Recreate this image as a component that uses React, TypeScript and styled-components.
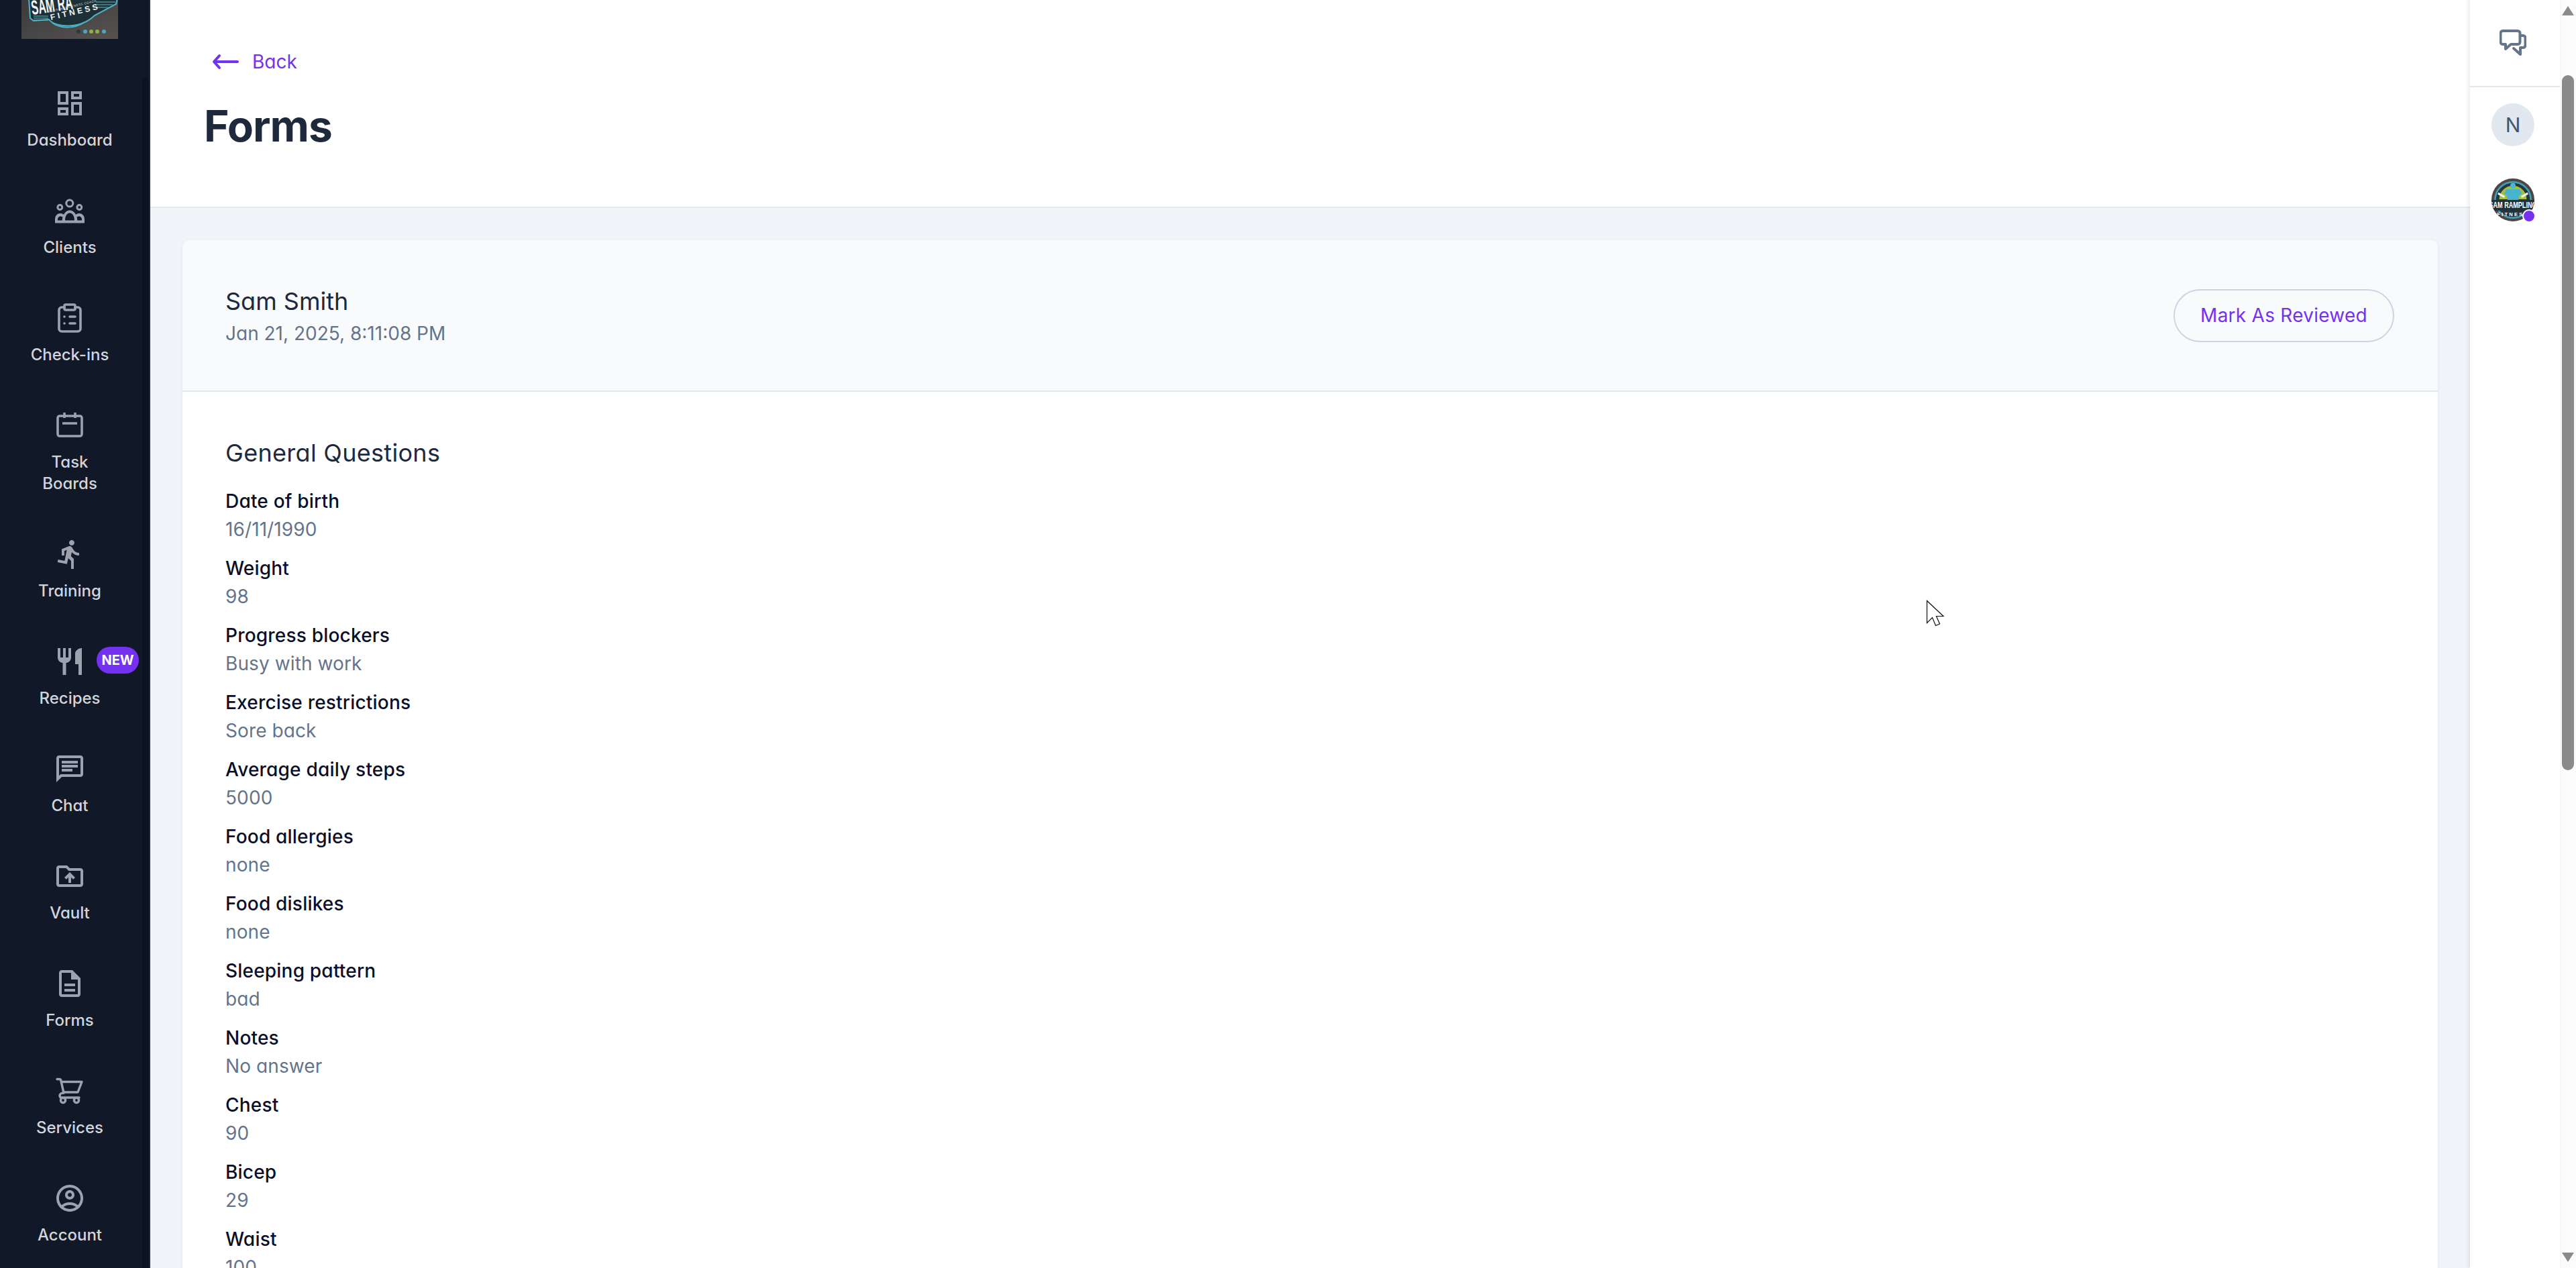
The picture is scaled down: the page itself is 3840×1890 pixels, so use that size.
import React from 'react';
import styled, { createGlobalStyle } from 'styled-components';
import {
  MdOutlineDashboard,
  MdDirectionsRun,
  MdRestaurant,
  MdOutlineChat,
  MdOutlineDriveFolderUpload,
  MdOutlineDescription,
  MdOutlineAccountCircle,
} from 'react-icons/md';
import { ClipboardList } from 'lucide-react';

const GlobalStyle = createGlobalStyle`
  html, body {
    margin: 0;
    padding: 0;
    height: 100%;
    overflow: hidden;
    background: #ffffff;
  }
  * {
    box-sizing: border-box;
  }
`;

const Page = styled.div`
  position: relative;
  display: flex;
  width: 3840px;
  height: 1890px;
  overflow: hidden;
  font-family: Inter, "Liberation Sans", sans-serif;
  font-feature-settings: 'cv11' 1;
`;

const Sidebar = styled.aside`
  position: relative;
  flex: 0 0 224px;
  display: flex;
  flex-direction: column;
  background: #111827;
  border-right: 2px solid #1f2937;
`;

const SidebarThumb = styled.div`
  position: absolute;
  top: 115px;
  right: 0;
  bottom: 0;
  width: 10px;
  border-radius: 5px 5px 0 0;
  background: #0c1320;
`;

const LogoCrop = styled.div`
  width: 144px;
  height: 58px;
  margin-left: 32px;
  overflow: hidden;
  flex: none;
`;

const NavList = styled.nav`
  display: flex;
  flex-direction: column;
  gap: 65px;
  padding-top: 72px;
`;

const NavItem = styled.a`
  position: relative;
  display: flex;
  flex-direction: column;
  align-items: center;
  gap: 15px;
  width: 170px;
  margin-left: 19px;
  color: #9ca3af;
`;

const IconBox = styled.span`
  display: flex;
  align-items: center;
  justify-content: center;
  width: 48px;
  height: 48px;
  font-size: 48px;
`;

const NavLabel = styled.span`
  max-width: 130px;
  font-size: 24px;
  line-height: 32px;
  font-weight: 500;
  text-align: center;
  color: #d1d5db;
`;

const NewBadge = styled.span`
  position: absolute;
  top: 2px;
  left: 125px;
  width: 63px;
  height: 40px;
  display: flex;
  align-items: center;
  justify-content: center;
  border-radius: 20px;
  background: #7431f1;
  color: #ffffff;
  font-size: 20px;
  font-weight: 700;
`;

const Main = styled.main`
  flex: 1;
  display: flex;
  flex-direction: column;
  min-width: 0;
  background: #f1f4f9;
`;

const PageHeader = styled.header`
  flex: 0 0 310px;
  padding: 72px 0 0 80px;
  background: #ffffff;
  border-bottom: 2px solid #e2e8f0;
`;

const BackLink = styled.a`
  display: flex;
  align-items: center;
  gap: 20px;
  height: 40px;
  margin-left: 12px;
  color: #7431f1;
  font-size: 28px;
`;

const PageTitle = styled.h1`
  margin: 40px 0 0;
  font-size: 64px;
  line-height: 72px;
  font-weight: 700;
  letter-spacing: -1px;
  color: #1e293b;
`;

const Content = styled.div`
  flex: 1;
  padding: 48px 48px 0;
`;

const Card = styled.section`
  border-radius: 10px 10px 0 0;
  background: #ffffff;
  box-shadow: 0 1px 5px rgba(15, 23, 42, 0.07);
`;

const CardHead = styled.div`
  display: flex;
  align-items: center;
  justify-content: space-between;
  height: 226px;
  padding: 0 65px 0 64px;
  border-radius: 10px 10px 0 0;
  background: #f9fafc;
  border-bottom: 2px solid #e2e8f0;
`;

const Submission = styled.div`
  display: flex;
  flex-direction: column;
  margin-top: 6px;
`;

const ClientName = styled.div`
  font-size: 36px;
  line-height: 48px;
  color: #1e293b;
`;

const SubmittedAt = styled.div`
  font-size: 28px;
  line-height: 48px;
  color: #64748b;
`;

const ReviewButton = styled.button`
  width: 329px;
  height: 79px;
  border: 2px solid #cdd5e3;
  border-radius: 40px;
  background: transparent;
  color: #7431f1;
  font-family: Inter, "Liberation Sans", sans-serif;
  font-feature-settings: normal;
  font-size: 28px;
  font-weight: 400;
  letter-spacing: 0.25px;
`;

const CardBody = styled.div`
  padding: 67px 65px 0 64px;
`;

const SectionTitle = styled.h2`
  margin: 0 0 27px;
  font-size: 36px;
  line-height: 48px;
  font-weight: 400;
  letter-spacing: 0.3px;
  color: #1e293b;
`;

const AnswerList = styled.div`
  display: flex;
  flex-direction: column;
  gap: 16px;
`;

const Answer = styled.div`
  display: flex;
  flex-direction: column;
`;

const Question = styled.div`
  font-size: 28px;
  line-height: 43px;
  font-weight: 500;
  letter-spacing: 0.2px;
  color: #0a0f29;
`;

const Reply = styled.div`
  font-size: 28px;
  line-height: 41px;
  letter-spacing: 0.1px;
  color: #64748b;
`;

const Rail = styled.aside`
  flex: 0 0 134px;
  display: flex;
  flex-direction: column;
  align-items: center;
  background: #ffffff;
  box-shadow: -2px 0 6px rgba(15, 23, 42, 0.1);
  z-index: 1;
`;

const RailTop = styled.div`
  width: 100%;
  height: 130px;
  display: flex;
  align-items: center;
  justify-content: center;
  padding-right: 6px;
  border-bottom: 2px solid #e2e8f0;
`;

const RailList = styled.div`
  display: flex;
  flex-direction: column;
  gap: 48px;
  padding-top: 24px;
  margin-right: 6px;
`;

const InitialAvatar = styled.div`
  width: 64px;
  height: 64px;
  display: flex;
  align-items: center;
  justify-content: center;
  border-radius: 50%;
  background: #e2e8f0;
  color: #475569;
  font-size: 30px;
`;

const LogoAvatar = styled.div`
  position: relative;
  width: 64px;
  height: 64px;
`;

const LogoAvatarClip = styled.div`
  width: 64px;
  height: 64px;
  border-radius: 50%;
  overflow: hidden;
`;

const PresenceDot = styled.span`
  position: absolute;
  right: -2px;
  bottom: -2px;
  width: 20px;
  height: 20px;
  border: 2px solid #ffffff;
  border-radius: 50%;
  background: #7431f1;
`;

const WindowScrollbar = styled.div`
  flex: 0 0 24px;
  display: flex;
  flex-direction: column;
  align-items: center;
  background: #fbfbfb;
`;

const ArrowUp = styled.span`
  width: 0;
  height: 0;
  margin-top: 9px;
  border-left: 9px solid transparent;
  border-right: 9px solid transparent;
  border-bottom: 14px solid #8a8a8a;
`;

const ScrollThumb = styled.span`
  width: 18px;
  height: 1036px;
  margin-top: 89px;
  border-radius: 9px;
  background: #8a8a8a;
`;

const ArrowDown = styled.span`
  width: 0;
  height: 0;
  margin-top: auto;
  margin-bottom: 9px;
  border-left: 9px solid transparent;
  border-right: 9px solid transparent;
  border-top: 14px solid #8a8a8a;
`;

const Pointer = styled.svg`
  position: absolute;
  left: 2871px;
  top: 894px;
`;

const ClientsIcon = () => (
  <svg width="48" height="48" viewBox="0 0 48 48">
    <g fill="none" stroke="currentColor" strokeWidth="3">
      <circle cx="23.8" cy="13" r="5" />
      <circle cx="9.3" cy="19" r="3.4" />
      <circle cx="38.3" cy="19" r="3.4" />
    </g>
    <path
      fill="currentColor"
      fillRule="evenodd"
      d="M2 42.500V37C2 31 6 28 10 28C12.500 28 14 29 15 30C17 26 20 23.500 24 23.500C28 23.500 31 26 33 30C34 29 35.500 28 38 28C42 28 46 31 46 37V42.500ZM17 38.500C17 32 20 27.500 24 27.500C28 27.500 31 32 31 38.500ZM6 38.500V37C6 34 8 32.500 10 32.500C11.500 32.500 12.500 33 13.500 33.500C13 35 12.800 36.500 12.800 38.500ZM42 38.500V37C42 34 40 32.500 38 32.500C36.500 32.500 35.500 33 34.500 33.500C35 35 35.200 36.500 35.200 38.500Z"
    />
  </svg>
);

const BoardsIcon = () => (
  <svg width="48" height="48" viewBox="0 0 48 48" fill="none" stroke="currentColor" strokeWidth="3.6">
    <rect x="6" y="10" width="36" height="30" rx="3" />
    <path d="M16 5v8M32 5v8M13 21h22" />
  </svg>
);

const CartIcon = () => (
  <svg width="48" height="48" viewBox="0 0 48 48" fill="none" stroke="currentColor" strokeWidth="3.4" strokeLinecap="round" strokeLinejoin="round">
    <path d="M5 6.500h3.500c1.200 0 2 .8 2.300 2L15 27" />
    <path d="M11.500 10.500H42L36 26H15" />
    <path d="M15 27C11 27 9 29 9 31C9 33 10.500 34 12 34H38" />
    <circle cx="14" cy="38" r="3.600" />
    <circle cx="34" cy="38" r="3.600" />
  </svg>
);

const BrandArt = ({ size }: { size: number }) => (
  <svg width={size} height={size} viewBox="0 0 144 144">
    <rect width="144" height="144" fill="#4f4643" />
    <circle cx="72" cy="72" r="60" fill="#27363c" stroke="#3f9fb8" strokeWidth="6" />
    <path d="M26 70a46 46 0 0 1 92 0z" fill="#a3bf3e" />
    <circle cx="72" cy="24" r="9" fill="#4bb6d0" />
    <path d="M50 36l44 0 8 14-10 8-2 18H54l-2-18-10-8z" fill="#48b3cd" />
    <path d="M22 50l22 12M100 62l22-12" stroke="#f1f1f1" strokeWidth="7" />
    <path d="M0 72h144v36H0z" fill="#1f3139" />
    <text x="72" y="98" textAnchor="middle" fontFamily="Liberation Sans" fontWeight="700" fontSize="29" textLength="160" lengthAdjust="spacingAndGlyphs" fill="#ffffff">
      SAM RAMPLING
    </text>
    <text x="72" y="125" textAnchor="middle" fontFamily="Liberation Sans" fontWeight="700" fontSize="17" letterSpacing="5" fill="#ffffff">
      FITNESS
    </text>
  </svg>
);

const TopLogo = () => (
  <svg width="144" height="58" viewBox="0 0 144 58">
    <defs>
      <linearGradient id="paper" x1="0" y1="0" x2="1" y2="1">
        <stop offset="0" stopColor="#3a3b3c" />
        <stop offset="1" stopColor="#575250" />
      </linearGradient>
    </defs>
    <rect width="144" height="58" fill="url(#paper)" />
    <path d="M11 -2L13 27L18 31L41 29C50 41 88 44 109 23L141 6L143 -2Z" fill="#1d3037" stroke="#4fb0c6" strokeWidth="2" />
    <path d="M18 24h22M18 27h22M18 30h22M111 3h29M111 7h25M111 11h18" stroke="#5fb9c4" strokeWidth="1.2" />
    <path d="M46 34c12 9 34 9 48 -1" fill="none" stroke="#4fb0c6" strokeWidth="2" />
    <text x="16" y="22" fontFamily="Liberation Sans" fontWeight="700" fontSize="30" textLength="62" lengthAdjust="spacingAndGlyphs" fill="#f4f4f4" transform="rotate(-8 16 22)">
      SAM RA
    </text>
    <text x="41" y="19" fontFamily="Liberation Sans" fontSize="4.5" letterSpacing="0.5" fill="#cfd6d8" transform="rotate(-13 41 19)">
      PERSONAL FITNESS COACH
    </text>
    <text x="44" y="30" fontFamily="Liberation Sans" fontWeight="700" fontSize="12" letterSpacing="3.6" fill="#f4f4f4" transform="rotate(-13 44 30)">
      FITNESS
    </text>
    <circle cx="85" cy="47" r="3" fill="#2a3a3e" />
    <circle cx="95" cy="47" r="3" fill="#47a8c0" />
    <circle cx="104" cy="47" r="3" fill="#8fb03e" />
    <circle cx="113" cy="47" r="3" fill="#8fb03e" />
    <circle cx="123" cy="47" r="3" fill="#47a8c0" />
  </svg>
);

const navItems = [
  { label: 'Dashboard', icon: <MdOutlineDashboard /> },
  { label: 'Clients', icon: <ClientsIcon /> },
  { label: 'Check-ins', icon: <ClipboardList size={48} strokeWidth={1.8} /> },
  { label: 'Task Boards', icon: <BoardsIcon /> },
  { label: 'Training', icon: <MdDirectionsRun /> },
  { label: 'Recipes', icon: <MdRestaurant />, isNew: true },
  { label: 'Chat', icon: <MdOutlineChat /> },
  { label: 'Vault', icon: <MdOutlineDriveFolderUpload /> },
  { label: 'Forms', icon: <MdOutlineDescription /> },
  { label: 'Services', icon: <CartIcon /> },
  { label: 'Account', icon: <MdOutlineAccountCircle /> },
];

const answers = [
  ['Date of birth', '16/11/1990'],
  ['Weight', '98'],
  ['Progress blockers', 'Busy with work'],
  ['Exercise restrictions', 'Sore back'],
  ['Average daily steps', '5000'],
  ['Food allergies', 'none'],
  ['Food dislikes', 'none'],
  ['Sleeping pattern', 'bad'],
  ['Notes', 'No answer'],
  ['Chest', '90'],
  ['Bicep', '29'],
  ['Waist', '100'],
];

const App: React.FC = () => {
  return (
    <Page>
      <GlobalStyle />
      <Sidebar>
        <LogoCrop>
          <TopLogo />
        </LogoCrop>
        <NavList>
          {navItems.map((item) => (
            <NavItem key={item.label}>
              <IconBox>{item.icon}</IconBox>
              <NavLabel>{item.label}</NavLabel>
              {item.isNew && <NewBadge>NEW</NewBadge>}
            </NavItem>
          ))}
        </NavList>
        <SidebarThumb />
      </Sidebar>

      <Main>
        <PageHeader>
          <BackLink>
            <svg width="40" height="24" viewBox="0 0 40 24" fill="none" stroke="currentColor" strokeWidth="4" strokeLinecap="round" strokeLinejoin="round">
              <path d="M38 12H3M11 3l-8 9 8 9" />
            </svg>
            Back
          </BackLink>
          <PageTitle>Forms</PageTitle>
        </PageHeader>
        <Content>
          <Card>
            <CardHead>
              <Submission>
                <ClientName>Sam Smith</ClientName>
                <SubmittedAt>Jan 21, 2025, 8:11:08 PM</SubmittedAt>
              </Submission>
              <ReviewButton>Mark As Reviewed</ReviewButton>
            </CardHead>
            <CardBody>
              <SectionTitle>General Questions</SectionTitle>
              <AnswerList>
                {answers.map(([question, reply]) => (
                  <Answer key={question}>
                    <Question>{question}</Question>
                    <Reply>{reply}</Reply>
                  </Answer>
                ))}
              </AnswerList>
            </CardBody>
          </Card>
        </Content>
      </Main>

      <Rail>
        <RailTop>
          <svg width="40" height="40" viewBox="0 0 40 40" fill="none" stroke="#64748b" strokeWidth="4" strokeLinejoin="round" strokeLinecap="round">
            <path d="M5 2h22a3.500 3.500 0 0 1 3.500 3.500v13a3.500 3.500 0 0 1-3.500 3.500H17l-8 7v-7H5a3.500 3.500 0 0 1-3.500-3.500v-13A3.500 3.500 0 0 1 5 2z" />
            <path d="M31 9h4a3.500 3.500 0 0 1 3.500 3.500v11A3.500 3.500 0 0 1 35 27h-4v10l-10-9" />
          </svg>
        </RailTop>
        <RailList>
          <InitialAvatar>N</InitialAvatar>
          <LogoAvatar>
            <LogoAvatarClip>
              <BrandArt size={64} />
            </LogoAvatarClip>
            <PresenceDot />
          </LogoAvatar>
        </RailList>
      </Rail>

      <WindowScrollbar>
        <ArrowUp />
        <ScrollThumb />
        <ArrowDown />
      </WindowScrollbar>

      <Pointer width="28" height="40" viewBox="0 0 28 40" fill="#ffffff" stroke="#111111" strokeWidth="1.2">
        <path d="M1.500 1.500v33l8-8 5 12 6-2.500-5-11.500h10.500z" />
      </Pointer>
    </Page>
  );
};

export default App;
